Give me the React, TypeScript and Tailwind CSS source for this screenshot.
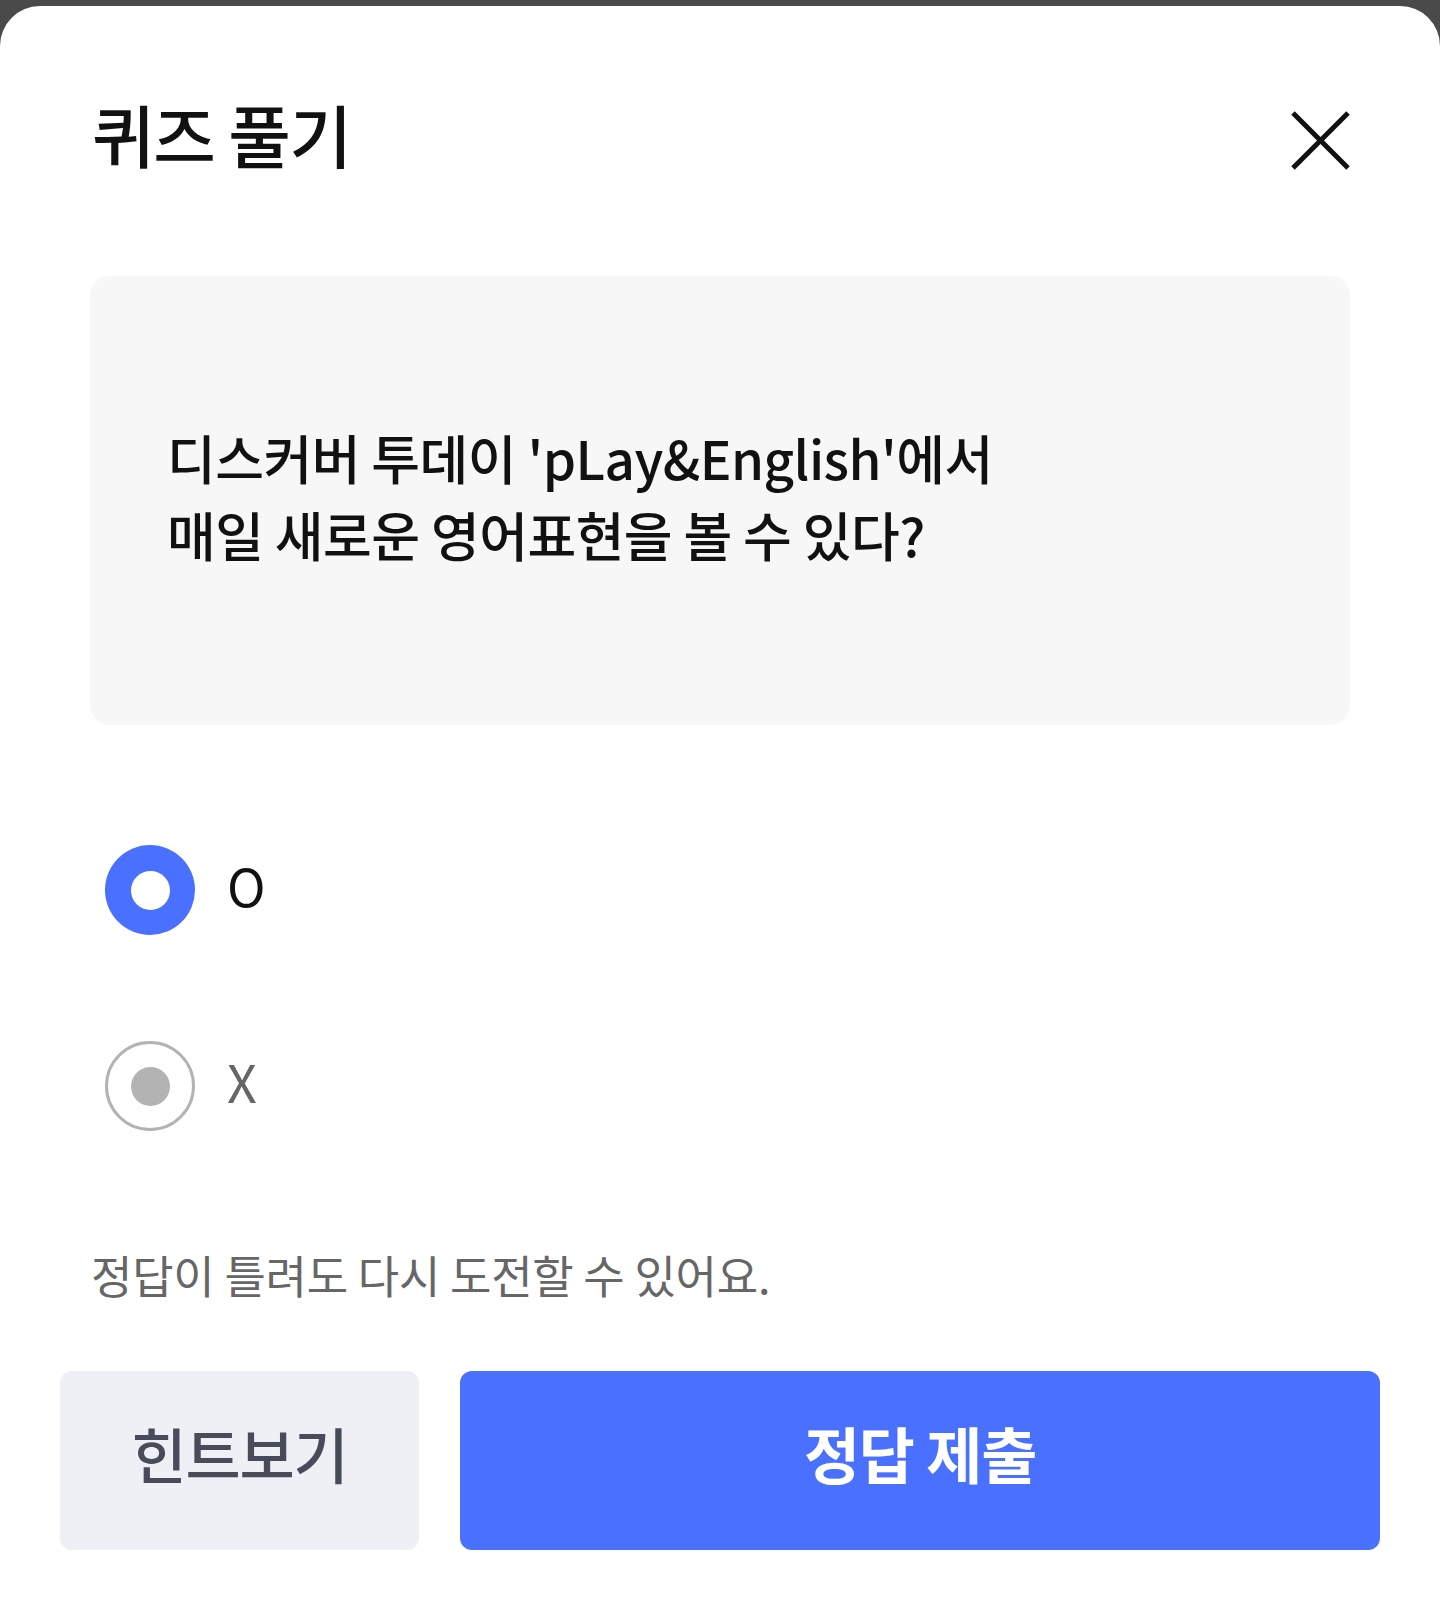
import React from "react";

export default function App() {
  const font = { fontFamily: '"Noto Sans CJK KR", "Noto Sans", sans-serif' };
  return (
    <div className="w-[1440px] h-[1608px] bg-[#4a4a4a] pt-[6px]" style={font}>
      <div className="bg-white rounded-t-[40px] h-[1602px] flex flex-col">
        {/* header */}
        <div className="flex items-center justify-between h-[72px] mt-[94px] pl-[92px] pr-[90px]">
          <h1 className="text-[68px] leading-none font-medium text-[#111] tracking-[-0.02em] -mt-[4px]">퀴즈 풀기</h1>
          <button className="w-[60px] h-[60px] mt-[8px] flex items-center justify-center" aria-label="닫기">
            <svg width="60" height="60" viewBox="0 0 60 60">
              <line x1="3" y1="3" x2="58" y2="58" stroke="#111" strokeWidth="5" />
              <line x1="58" y1="3" x2="3" y2="58" stroke="#111" strokeWidth="5" />
            </svg>
          </button>
        </div>

        {/* question box */}
        <div className="mx-[90px] mt-[104px] h-[449px] rounded-[20px] bg-[#f7f7f7] flex items-center pl-[77px] pb-[10px]">
          <p className="text-[53px] leading-[77px] font-medium text-[#111] tracking-[-0.01em]">
            디스커버 투데이 'pLay&amp;English'에서
            <br />
            매일 새로운 영어표현을 볼 수 있다?
          </p>
        </div>

        {/* options */}
        <div className="flex flex-col pl-[105px] mt-[120px] gap-[106px]">
          <label className="flex items-center gap-[32px] h-[90px]">
            <span className="w-[90px] h-[90px] rounded-full bg-[#4a70ff] flex items-center justify-center">
              <span className="w-[39px] h-[39px] rounded-full bg-white" />
            </span>
            <span className="text-[52px] leading-none text-[#111] -mt-[10px]">O</span>
          </label>
          <label className="flex items-center gap-[32px] h-[90px]">
            <span className="w-[90px] h-[90px] rounded-full border-[3px] border-[#b3b3b3] flex items-center justify-center">
              <span className="w-[39px] h-[39px] rounded-full bg-[#b3b3b3]" />
            </span>
            <span className="text-[52px] leading-none text-[#666] -mt-[10px]">X</span>
          </label>
        </div>

        {/* helper */}
        <p className="mt-[112px] pl-[91px] text-[45px] leading-[63px] text-[#666] tracking-[-0.005em]">
          정답이 틀려도 다시 도전할 수 있어요.
        </p>

        {/* buttons */}
        <div className="flex gap-[41px] px-[60px] mt-[65px]">
          <button className="w-[359px] h-[179px] rounded-[12px] bg-[#eef0f5] text-[#474b5a] text-[60px] font-medium tracking-[-0.02em] pb-[16px]">
            힌트보기
          </button>
          <button className="flex-1 h-[179px] rounded-[12px] bg-[#4a70ff] text-white text-[61px] font-bold tracking-[-0.02em] pb-[16px]">
            정답 제출
          </button>
        </div>
      </div>
    </div>
  );
}
